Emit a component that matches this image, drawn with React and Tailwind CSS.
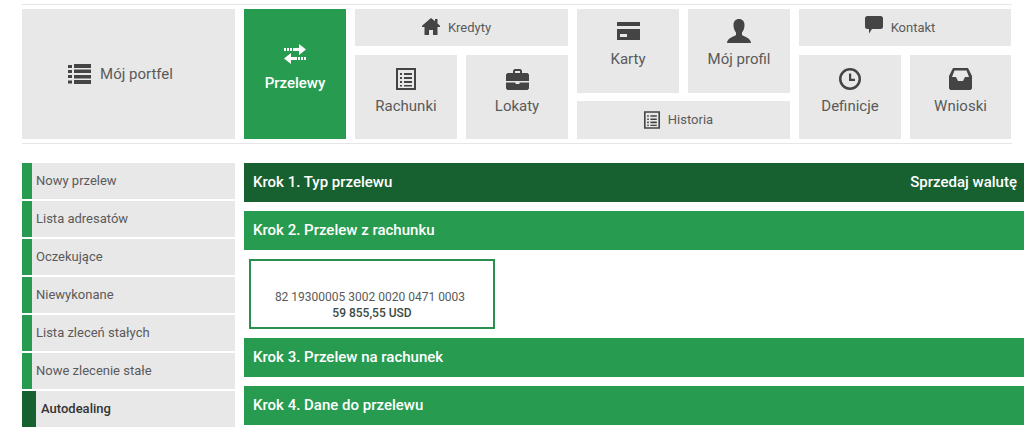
import React from "react";

const Ic = ({ w = 24, h = 24, vb = "0 0 24 24", children, cls = "text-[#444]" }) => (
  <svg width={w} height={h} viewBox={vb} fill="currentColor" className={cls + " shrink-0"}>{children}</svg>
);

const ListIcon = () => (
  <Ic w={23} h={20} vb="0 0 23 20">
    <path d="M0 1h4v3H0zM6 0h17v4H6zM0 6h4v3H0zM6 5.500h17v3.500H6zM0 11h4v3H0zM6 11h17v3.500H6zM0 16.500h4v3H0zM6 16h17v4H6z" />
  </Ic>
);
const Exchange = () => (
  <Ic w={22} h={20} vb="0 0 22 20" cls="text-white">
    <path d="M0 4h2v3H0zM3 4h2v3H3zM6 4h2v3H6zM9 4h6V0l7 5.500L15 11V7H9z" />
    <path d="M22 13h-2v3h2zM19 13h-2v3h2zM16 13h-2v3h2zM13 13H7V9L0 14.500 7 20v-4h6z" />
  </Ic>
);
const Home = () => (
  <Ic w={18} h={17} vb="0 0 18 17">
    <path d="M9 0l4 3.300V1h2.500v4.400L18 7.700V9H15.500V17H11v-5H7v5H2.500V9H0V7.700z" />
  </Ic>
);
const Doc = ({ s = 20 }) => (
  <Ic w={s} h={s + 2} vb="0 0 20 22">
    <path fillRule="evenodd" d="M0 0h20v22H0zM2 2v18h16V2zM4 5h2v2H4zM8 5h8v2H8zM4 9h2v2H4zM8 9h8v2H8zM4 13h2v2H4zM8 13h8v2H8zM4 17h2v1.500H4zM8 17h8v1.500H8z" />
  </Ic>
);
const Case = () => (
  <Ic w={23} h={21} vb="0 0 23 21">
    <path fillRule="evenodd" d="M7 4V1.500L8.500 0h6L16 1.500V4h5.500L23 5.500V12H0V5.500L1.500 4zM9 2v2h5V2z" />
    <path d="M0 13.500h9.500V15h4v-1.500H23V19.500L21.500 21h-20L0 19.500z" />
  </Ic>
);
const Card = () => (
  <Ic w={23} h={18} vb="0 0 23 18">
    <path fillRule="evenodd" d="M0 0h23v4H0zM0 7h23v11H0zM3 12v3h7v-3z" />
  </Ic>
);
const Person = () => (
  <Ic w={24} h={24} vb="0 0 24 24">
    <path d="M12 0c3.500 0 5.500 2.500 5.500 6 0 3-1 5.500-2.500 7.500v2.500c1 1.500 9 2.500 9 8H0c0-5.500 8-6.500 9-8v-2.500C7.500 11.500 6.500 9 6.500 6c0-3.500 2-6 5.500-6z" />
  </Ic>
);
const Chat = () => (
  <Ic w={18} h={18} vb="0 0 18 18">
    <path d="M2.500 0h13A2.500 2.500 0 0 1 18 2.500v8a2.500 2.500 0 0 1-2.500 2.500H7l-3 4.500V13H2.500A2.500 2.500 0 0 1 0 10.500v-8A2.500 2.500 0 0 1 2.500 0z" />
  </Ic>
);
const Clock = () => (
  <Ic w={22} h={22} vb="0 0 22 22">
    <path fillRule="evenodd" d="M11 0a11 11 0 1 1 0 22a11 11 0 0 1 0-22zM11 2.500a8.500 8.500 0 1 0 0 17a8.500 8.500 0 0 0 0-17z" />
    <path d="M10 5.500h2.200v5.300H16V13h-6z" />
  </Ic>
);
const Inbox = () => (
  <Ic w={23} h={22} vb="0 0 23 22">
    <path fillRule="evenodd" d="M4 0h15l4 8v12.500L21.500 22h-20L0 20.500V8zM5.500 2.500L3 9h4l2 4h5l2-4h4l-2.500-6.500z" />
  </Ic>
);

const Tile = ({ icon, label, className = "" }) => (
  <div className={"flex flex-col items-center bg-[#e8e8e8] text-[15px] leading-5 text-[#5a5a5a] " + className}>
    <div className="mt-[12px] flex h-[24px] items-center">{icon}</div>
    <div className="mt-[5px]">{label}</div>
  </div>
);

const Wide = ({ icon, label, className = "" }) => (
  <div className={"flex h-[37px] items-center justify-center gap-[8px] bg-[#e8e8e8] pr-[10px] text-[13px] text-[#5a5a5a] " + className}>
    {icon}
    <span>{label}</span>
  </div>
);

const sideItems = ["Nowy przelew", "Lista adresatów", "Oczekujące", "Niewykonane", "Lista zleceń stałych", "Nowe zlecenie stałe"];

const Step = ({ dark, title, right }) => (
  <div className={"flex h-[39px] items-center justify-between pl-[9px] pr-[7px] text-[15px] font-medium text-white " + (dark ? "bg-[#17602f]" : "bg-[#279c50]")}>
    <span>{title}</span>
    {right && <span>{right}</span>}
  </div>
);

export default function App() {
  return (
    <div className="h-[442px] w-[1024px] overflow-hidden bg-white pt-[4px] font-['Roboto',sans-serif]">
      <div className="ml-[22px] w-[990px] border-y border-[#e6e6e6] py-[4px]">
        <div className="flex h-[130px] gap-[9px]">
          <div className="flex w-[213px] items-center justify-center gap-[9px] bg-[#e8e8e8] pr-[16px] text-[15px] text-[#5a5a5a]">
            <ListIcon />
            <span>Mój portfel</span>
          </div>
          <div className="flex w-[102px] flex-col items-center bg-[#279c50] text-white">
            <div className="mt-[35px]"><Exchange /></div>
            <div className="mt-[9px] text-[15px] font-medium leading-5">Przelewy</div>
          </div>
          <div className="flex w-[213px] flex-col gap-[9px]">
            <Wide icon={<span className="-mt-[3px]"><Home /></span>} label="Kredyty" />
            <div className="flex h-[84px] gap-[9px]">
              <Tile className="w-[102px]" icon={<Doc />} label="Rachunki" />
              <Tile className="w-[102px]" icon={<Case />} label="Lokaty" />
            </div>
          </div>
          <div className="flex w-[213px] flex-col gap-[8px]">
            <div className="flex h-[84px] gap-[9px]">
              <Tile className="w-[102px] [&>div:first-child]:mt-[10px] [&>div:last-child]:mt-[6px]" icon={<Card />} label="Karty" />
              <Tile className="w-[102px] [&>div:first-child]:mt-[10px] [&>div:last-child]:mt-[6px]" icon={<Person />} label="Mój profil" />
            </div>
            <Wide className="h-[38px]" icon={<Doc s={16} />} label="Historia" />
          </div>
          <div className="flex w-[212px] flex-col gap-[9px]">
            <Wide icon={<span className="-mt-[5px]"><Chat /></span>} label="Kontakt" />
            <div className="flex h-[84px] gap-[9px]">
              <Tile className="w-[102px]" icon={<Clock />} label="Definicje" />
              <Tile className="w-[101px]" icon={<Inbox />} label="Wnioski" />
            </div>
          </div>
        </div>
      </div>

      <div className="mt-[19px] ml-[22px] flex gap-[9px]">
        <div className="flex w-[213px] flex-col gap-[2px]">
          {sideItems.map((t) => (
            <div key={t} className="flex h-[36px] bg-[#e8e8e8] text-[13px] text-[#5a5a5a]">
              <div className="w-[10px] bg-[#279c50]" />
              <div className="pl-[4px] pt-[8px] leading-5">{t}</div>
            </div>
          ))}
          <div className="flex h-[36px] bg-[#e8e8e8] text-[13px] font-medium text-[#333]">
            <div className="w-[14px] bg-[#17602f]" />
            <div className="pl-[5px] pt-[8px] leading-5">Autodealing</div>
          </div>
        </div>
        <div className="flex w-[780px] flex-col gap-[9px]">
          <Step dark title="Krok 1. Typ przelewu" right="Sprzedaj walutę" />
          <Step title="Krok 2. Przelew z rachunku" />
          <div className="ml-[5px] flex h-[70px] w-[246px] flex-col items-center justify-center border-2 border-[#2b8f50] pt-[21px] text-[12px] leading-[16px] text-[#5a5a5a]">
            <div className="pr-[4px]">82 19300005 3002 0020 0471 0003</div>
            <div className="font-medium text-[#3b4a40]">59 855,55 USD</div>
          </div>
          <Step title="Krok 3. Przelew na rachunek" />
          <Step title="Krok 4. Dane do przelewu" />
        </div>
      </div>
    </div>
  );
}
